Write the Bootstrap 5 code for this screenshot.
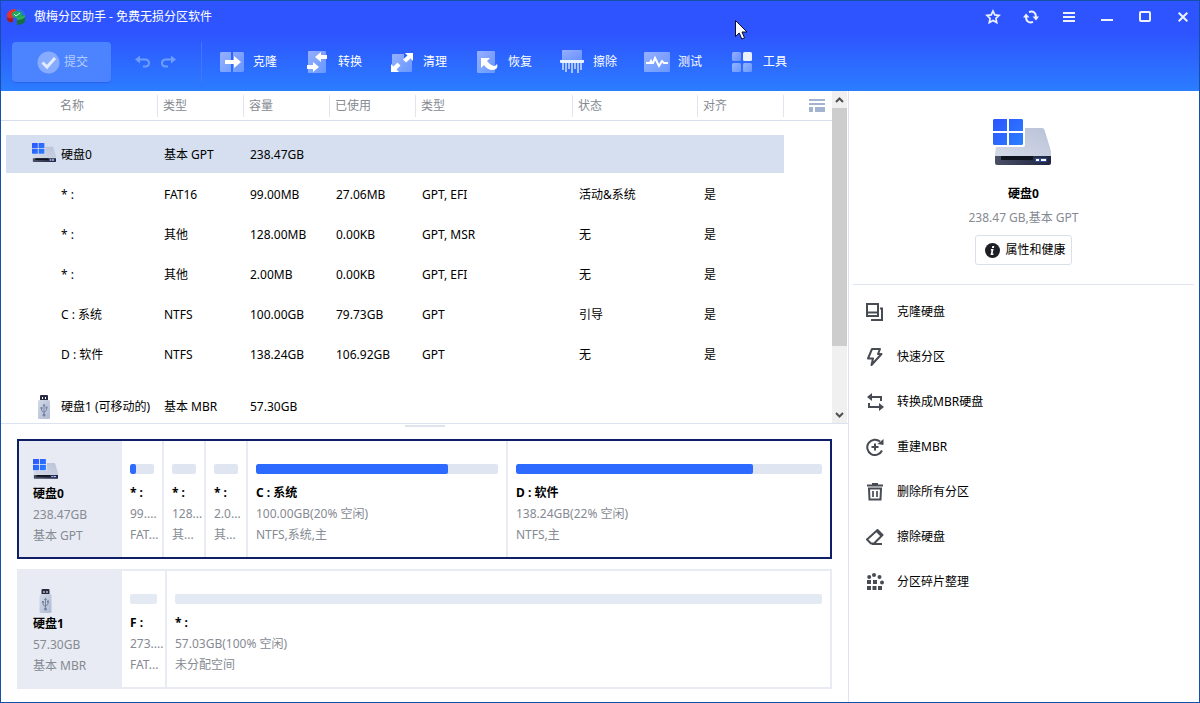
<!DOCTYPE html>
<html lang="zh-CN">
<head>
<meta charset="utf-8">
<meta name="viewport" content="width=device-width, initial-scale=1">
<title>傲梅分区助手</title>
<link href="https://cdn.jsdelivr.net/npm/bootstrap@5.3.0/dist/css/bootstrap.min.css" rel="stylesheet">
<style>
  body { font: 12px/20px "Noto Sans", "Noto Sans CJK SC", sans-serif; color: #000; background: #fff; }
  button { font: inherit; color: inherit; background: none; border: 0; padding: 0; }
  svg { display: block; flex: none; }
  .app-window { min-height: 100vh; border: 1px solid #1450a8; }

  /* header */
  .app-header { height: 90px; color: #fff; background: linear-gradient(#2e54ff 32px, #2b7dff 90px); }
  .title-bar { height: 32px; padding: 0 1px 0 6px; }
  .win-btn { width: 30px; height: 30px; display: grid; place-items: center; }
  .tool-bar { height: 58px; padding-left: 11px; }
  .submit-btn { width: 99px; height: 40px; border-radius: 4px; background: #4c83ff; color: #b4ccff; box-shadow: 0 1px 1px #2a62ea; padding-left: 2px; }
  .tool-sep { width: 1px; height: 40px; background: #4474f8; margin: 0 14px 0 22px; }
  .tool-btn { width: 85px; gap: 5px; }
  .undo-group { margin-left: 24px; gap: 8px; }

  /* partition table */
  .main-pane { border-right: 1px solid #dde2f0; }
  .grid-pane { flex: 1 1 0; min-height: 200px; overflow: hidden; border-bottom: 1px solid #dde2f0; }
  .part-table { width: 100%; table-layout: fixed; border-collapse: separate; border-spacing: 0; }
  .part-table th { font-weight: 400; color: #868a92; height: 30px; padding: 0; border-bottom: 1px solid #d8deec; }
  .part-table th > div { height: 22px; line-height: 22px; padding-left: 5px; border-right: 1px solid #e2e5ef; }
  .part-table th:first-child > div { padding-left: 59px; }
  .part-table th:last-child > div { border: 0; padding-right: 7px; }
  .part-table tbody::before { content: ""; display: block; height: 14px; }
  .part-table td { height: 40px; padding: 4px 0 0 6px; white-space: nowrap; }
  .part-table td:first-child { padding-left: 60px; }
  .part-table .disk-row td { height: 38px; padding-top: 2px; }
  .part-table .disk-row td:first-child { border-left: 5px solid #fff; padding-left: 26px; }
  .part-table .picked td { background: #d5dfef; }
  .part-table .picked td:last-child { background: none; }
  .disk-ico { width: 24px; margin-right: 5px; }
  .scroll-rail { width: 15px; margin-right: 1px; background: #f0f0f0; }
  .scroll-btn { height: 17px; width: 15px; display: grid; place-items: center; }
  .scroll-thumb { background: #cdcdcd; height: 80%; }

  /* disk map */
  .split-grip { width: 40px; height: 2px; margin: 1px auto 12px; background: #dfe3ee; }
  .disk-map { padding: 0 16px 13px; gap: 10px; }
  .disk-box { height: 120px; border: 2px solid #e8ebf3; line-height: 21px; }
  .disk-box.chosen { border-color: #0f1f66; }
  .disk-label { width: 103px; flex: none; background: #e8ebf3; padding: 18px 0 0 14px; }
  .disk-label svg { margin-bottom: 4px; }
  .part-cell { padding: 23px 0 0 8px; border-right: 2px solid #e8ebf3; white-space: nowrap; overflow: hidden; min-width: 0; }
  .part-cell:last-child { border-right: 0; }
  .tiny { flex: 0 0 42px; }
  .tiny-wide { flex: 0 0 45px; }
  .use-bar { height: 10px; margin: 0 8px 8px 0; background: #dfe6f2; border-radius: 2px; overflow: hidden; }
  .use-bar > div { height: 10px; background: #2d6aff; border-radius: 2px; }
  .use-bar.blank { background: #e4eaf4; }
  .dim { color: #868a92; }

  /* side panel */
  .side-pane { flex: 0 0 350px; padding: 28px 5px 0 4px; }
  .disk-info { padding-bottom: 19px; border-bottom: 1px solid #e0e3f2; }
  .disk-pic { margin: 0 4px 19px 0; }
  .info-btn { border: 1px solid #dadfec; border-radius: 3px; height: 30px; width: 97px; gap: 5px; margin-top: 7px; padding-left: 4px; }
  .act-btn { height: 45px; padding-left: 13px; gap: 13px; color: #000; }
  .act-btn svg { color: #474c54; }
  .pointer { position: absolute; left: 735px; top: 20px; }
</style>
</head>
<body>
<svg width="0" height="0" class="position-absolute" aria-hidden="true">
  <defs>
    <linearGradient id="winG" gradientUnits="userSpaceOnUse" x1="0" y1="0" x2="30" y2="26"><stop offset="0" stop-color="#2d54ff"/><stop offset="1" stop-color="#2b80ff"/></linearGradient>
    <linearGradient id="topG" x1="0" y1="1" x2="1" y2="0"><stop offset="0" stop-color="#d5dae7"/><stop offset="1" stop-color="#b9c2d8"/></linearGradient>
    <linearGradient id="drkG"><stop offset="0" stop-color="#4a4f66"/><stop offset="1" stop-color="#1f2540"/></linearGradient>
    <linearGradient id="usbG" x1="0" y1="0" x2="1" y2="1"><stop offset="0" stop-color="#d3dae8"/><stop offset="1" stop-color="#aeb9d2"/></linearGradient>
    <linearGradient id="lt" x1="0" y1="0" x2="1" y2="1"><stop offset="0" stop-color="#fff" stop-opacity=".5"/><stop offset="1" stop-color="#fff" stop-opacity=".28"/></linearGradient>
    <symbol id="hdd" viewBox="0 0 58 46" preserveAspectRatio="xMidYMin">
      <path d="M32 9h17q2 0 2.500 2L58 32v5H2v-3l1-6h27q2 0 2-2z" fill="url(#topG)"/>
      <path d="M2 37h56v7q0 2-2 2H4q-2 0-2-2z" fill="url(#drkG)"/>
      <path d="M8 37h32v3q0 1-1 1H9q-1 0-1-1z" fill="#10141f"/>
      <path d="M42 39h12v4H42z" fill="#2f4a94"/><path d="M43 40h3v2h-3zM48 40h5v2h-5z" fill="#fff"/>
      <path d="M1 0h13v12H0V1zM16 0h13l1 1v11H16zM0 14h14v12H1l-1-1zM16 14h14v11l-1 1H16z" fill="url(#winG)"/>
    </symbol>
    <symbol id="usb" viewBox="0 0 12 24">
      <path d="M2 1q0-1 1-1h6q1 0 1 1v4H2z" fill="#272c44"/><path d="M4 2h1v2H4zM7 2h1v2H7z" fill="#fff"/>
      <rect y="5" width="12" height="19" rx="1.500" fill="url(#usbG)"/>
      <path d="M6 10v10M3.500 13v2q0 1.500 2.500 2.500M8.500 12.500v2q0 1.500-2.500 2.500" fill="none" stroke="#7683a0"/><path d="M6 8.500l1.500 2.500h-3zM2.500 12h2v2h-2zM7.500 11.500h2v2h-2z" fill="#7683a0"/><circle cx="6" cy="20" r="1.500" fill="#7683a0"/>
    </symbol>
  </defs>
</svg>

<div class="app-window d-flex flex-column">
  <header class="app-header">
    <div class="title-bar d-flex align-items-center">
      <svg width="19" height="16" viewBox="0 0 19 16"><path d="M0 10V5q2-5 9-5v5l-3 2v4l-3 1q-3 0-3-2z" fill="#e0342c"/><path d="M0 8q3 2 6 1v4q-5 1-6-3z" fill="#a91c1c"/><path d="M10 0q8 0 8 6l-8 1z" fill="#2d6fe8"/><path d="M5 5q1-3 5-3 5 0 5 3 0 4-5 4-5 0-5-4z" fill="#1ea865"/><path d="M10 8l8-2v7q-3 3-8 3z" fill="#176f3f"/><path d="M10 8l8-2v2q-2 3-8 3z" fill="#2cae55"/><path d="M7 5l2 2 4-3" stroke="#c5f4d6" fill="none"/></svg>
      <span class="ms-2 flex-grow-1">傲梅分区助手 - 免费无损分区软件</span>
      <div class="d-flex gap-2">
        <button class="win-btn" aria-label="收藏"><svg width="16" height="16" viewBox="0 0 16 16" fill="none" stroke="#eef2ff" stroke-width="1.700"><path d="M8 2l1.800 3.900 4.200.5-3.100 2.900.8 4.200L8 11.400l-3.700 2.100.8-4.200L2 6.400l4.200-.5z"/></svg></button>
        <button class="win-btn" aria-label="刷新"><svg width="16" height="16" viewBox="0 0 16 16" fill="none" stroke="#eef2ff" stroke-width="2"><path d="M6 3.200Q9 1.800 11.500 3.700 13 5 13 8M10 12.800Q7 14.200 4.500 12.300 3 11 3 8"/><path d="M9.500 7.500H16l-3 4zM0 8.500h6.500L3 4.500z" fill="#eef2ff" stroke="none"/></svg></button>
        <button class="win-btn" aria-label="菜单"><svg width="12" height="10"><path d="M0 1h12M0 5h12M0 9h12" stroke="#eef2ff" stroke-width="2"/></svg></button>
        <button class="win-btn" aria-label="最小化"><svg width="12" height="10"><path d="M0 8h12" stroke="#eef2ff" stroke-width="2"/></svg></button>
        <button class="win-btn" aria-label="最大化"><svg width="12" height="12"><rect x="1" y="1" width="10" height="9" rx="1" fill="none" stroke="#eef2ff" stroke-width="2"/></svg></button>
        <button class="win-btn" aria-label="关闭"><svg width="10" height="10"><path d="M.7.700l8.600 8.600M9.300.700L.7 9.300" stroke="#eef2ff" stroke-width="2"/></svg></button>
      </div>
    </div>
    <div class="tool-bar d-flex align-items-center">
      <button class="submit-btn d-flex align-items-center justify-content-center gap-1"><svg width="23" height="23" viewBox="0 0 23 23"><circle cx="11.500" cy="11.500" r="11" fill="#86abff"/><path d="M5.500 11.500l4.500 4.500 8-9" fill="none" stroke="#e3ecff" stroke-width="3"/></svg>提交</button>
      <div class="undo-group d-flex">
        <button aria-label="撤销"><svg width="18" height="14" viewBox="0 0 18 14"><path d="M4 4.500h6q4 0 4 3.500t-4 3.500H8" fill="none" stroke="#6f9dff" stroke-width="2"/><path d="M0 4.500l5-4v8z" fill="#6f9dff"/></svg></button>
        <button aria-label="重做"><svg width="18" height="14" viewBox="0 0 18 14"><path d="M11 4.500H5q-4 0-4 3.500t4 3.500h2" fill="none" stroke="#6f9dff" stroke-width="2"/><path d="M15 4.500l-5-4v8z" fill="#6f9dff"/></svg></button>
      </div>
      <div class="tool-sep"></div>
      <button class="tool-btn d-flex align-items-center"><svg width="32" height="24" viewBox="0 0 32 24"><path d="M5 2h10v20H5l-1-1V3zM17 2h10l1 1v18l-1 1H17z" fill="url(#lt)"/><path d="M9 10h9V6l7 6-7 6v-4H9z" fill="#fff"/></svg>克隆</button>
      <button class="tool-btn d-flex align-items-center"><svg width="32" height="24" viewBox="0 0 32 24"><rect x="7" y="1" width="18" height="22" rx="1" fill="url(#lt)"/><path d="M26 5h-6V2l-6 5 6 5V9h6zM6 15h6v-3l6 5-6 5v-3H6z" fill="#fff"/></svg>转换</button>
      <button class="tool-btn d-flex align-items-center"><svg width="32" height="24" viewBox="0 0 32 24"><path d="M6 5q0-1 1-1h11v5h8v12q0 1-1 1H7q-1 0-1-1z" fill="url(#lt)"/><path d="M19 3h8v8l-2.500-2.500-4.500 4-3-3 4.500-4zM5 14v8h8l-2.500-2.500 4-4-3-3-4 4z" fill="#fff"/></svg>清理</button>
      <button class="tool-btn d-flex align-items-center"><svg width="32" height="24" viewBox="0 0 32 24"><rect x="6" y="1" width="18" height="22" rx="1" fill="url(#lt)"/><path d="M10 8h9l-3 3q4 5 8 5l2-2q2 5-4 6-6 0-9-5l-3 3z" fill="#fff"/></svg>恢复</button>
      <button class="tool-btn d-flex align-items-center"><svg width="32" height="24" viewBox="0 0 32 24"><path d="M6 10V1q0-1 1-1h18q1 0 1 1v9z" fill="url(#lt)"/><path d="M4 10h24v2q0 1-1 1H5q-1 0-1-1z" fill="#eaf1ff"/><path d="M7 13v7M10 13v9M13 13v6M16 13v10M19 13v6M22 13v10M25 13v7" stroke="#a5c2ff" stroke-width="2"/></svg>擦除</button>
      <button class="tool-btn d-flex align-items-center"><svg width="32" height="24" viewBox="0 0 32 24"><rect x="3" y="2" width="26" height="20" rx="1" fill="url(#lt)"/><path d="M5 13h4l1-2 1 2h1l2-5 4 8 3-5 2 2h4" fill="none" stroke="#fff" stroke-width="2"/></svg>测试</button>
      <button class="tool-btn d-flex align-items-center"><svg width="32" height="24" viewBox="0 0 32 24"><rect x="6" y="2" width="9" height="9" rx="1.500" fill="url(#lt)"/><rect x="17" y="2" width="9" height="9" rx="1.500" fill="#e9f0ff"/><rect x="6" y="13" width="9" height="9" rx="1.500" fill="url(#lt)"/><rect x="17" y="13" width="9" height="9" rx="1.500" fill="url(#lt)"/></svg>工具</button>
    </div>
  </header>

  <div class="d-flex flex-grow-1">
    <main class="main-pane d-flex flex-column flex-grow-1">
      <div class="grid-pane d-flex">
        <div class="flex-grow-1">
          <table class="part-table">
            <colgroup><col style="width:157px"><col style="width:86px"><col style="width:86px"><col style="width:86px"><col style="width:157px"><col style="width:125px"><col style="width:86px"><col></colgroup>
            <thead>
              <tr><th><div>名称</div></th><th><div>类型</div></th><th><div>容量</div></th><th><div>已使用</div></th><th><div>类型</div></th><th><div>状态</div></th><th><div>对齐</div></th>
              <th><div class="d-flex align-items-center justify-content-end"><button aria-label="选择列"><svg width="16" height="13"><path d="M0 1h16M0 5h16" stroke="#a3b4d0" stroke-width="2"/><path d="M0 8h4v5H0zM6 8h10v5H6z" fill="#a3b4d0"/></svg></button></div></th></tr>
            </thead>
            <tbody>
              <tr class="disk-row picked"><td><div class="d-flex align-items-center"><svg class="disk-ico" height="24"><use href="#hdd"/></svg>硬盘0</div></td><td>基本 GPT</td><td>238.47GB</td><td></td><td></td><td></td><td></td><td></td></tr>
              <tr><td>* :</td><td>FAT16</td><td>99.00MB</td><td>27.06MB</td><td>GPT, EFI</td><td>活动&amp;系统</td><td>是</td><td></td></tr>
              <tr><td>* :</td><td>其他</td><td>128.00MB</td><td>0.00KB</td><td>GPT, MSR</td><td>无</td><td>是</td><td></td></tr>
              <tr><td>* :</td><td>其他</td><td>2.00MB</td><td>0.00KB</td><td>GPT, EFI</td><td>无</td><td>是</td><td></td></tr>
              <tr><td>C : 系统</td><td>NTFS</td><td>100.00GB</td><td>79.73GB</td><td>GPT</td><td>引导</td><td>是</td><td></td></tr>
              <tr><td>D : 软件</td><td>NTFS</td><td>138.24GB</td><td>106.92GB</td><td>GPT</td><td>无</td><td>是</td><td></td></tr>
            </tbody>
            <tbody>
              <tr class="disk-row"><td><div class="d-flex align-items-center"><svg class="disk-ico" height="24"><use href="#usb"/></svg>硬盘1 (可移动的)</div></td><td>基本 MBR</td><td>57.30GB</td><td></td><td></td><td></td><td></td><td></td></tr>
            </tbody>
          </table>
        </div>
        <div class="scroll-rail d-flex flex-column flex-shrink-0">
          <button class="scroll-btn" aria-label="向上滚动"><svg width="9" height="6"><path d="M1 5l3.500-3.500L8 5" fill="none" stroke="#505050" stroke-width="2"/></svg></button>
          <div class="flex-grow-1"><div class="scroll-thumb"></div></div>
          <button class="scroll-btn" aria-label="向下滚动"><svg width="9" height="6"><path d="M1 1l3.500 3.500L8 1" fill="none" stroke="#505050" stroke-width="2"/></svg></button>
        </div>
      </div>

      <div class="split-grip"></div>
      <div class="disk-map d-flex flex-column">
        <section class="disk-box chosen d-flex">
          <div class="disk-label"><svg width="25" height="20"><use href="#hdd"/></svg><div class="fw-bold">硬盘0</div><div class="dim">238.47GB</div><div class="dim">基本 GPT</div></div>
          <div class="part-cell tiny"><div class="use-bar"><div style="width:27%"></div></div><div class="fw-bold">* :</div><div class="dim">99....</div><div class="dim">FAT...</div></div>
          <div class="part-cell tiny"><div class="use-bar"></div><div class="fw-bold">* :</div><div class="dim">128...</div><div class="dim">其...</div></div>
          <div class="part-cell tiny"><div class="use-bar"></div><div class="fw-bold">* :</div><div class="dim">2.0...</div><div class="dim">其...</div></div>
          <div class="part-cell" style="flex:250 1 0"><div class="use-bar"><div style="width:79.500%"></div></div><div class="fw-bold">C : 系统</div><div class="dim">100.00GB(20% 空闲)</div><div class="dim">NTFS,系统,主</div></div>
          <div class="part-cell" style="flex:314 1 0"><div class="use-bar"><div style="width:77.300%"></div></div><div class="fw-bold">D : 软件</div><div class="dim">138.24GB(22% 空闲)</div><div class="dim">NTFS,主</div></div>
        </section>
        <section class="disk-box d-flex">
          <div class="disk-label"><svg width="25" height="24" class="mb-0"><use href="#usb"/></svg><div class="fw-bold">硬盘1</div><div class="dim">57.30GB</div><div class="dim">基本 MBR</div></div>
          <div class="part-cell tiny-wide"><div class="use-bar blank"></div><div class="fw-bold">F :</div><div class="dim">273....</div><div class="dim">FAT...</div></div>
          <div class="part-cell flex-grow-1"><div class="use-bar blank"></div><div class="fw-bold">* :</div><div class="dim">57.03GB(100% 空闲)</div><div class="dim">未分配空间</div></div>
        </section>
      </div>
    </main>

    <aside class="side-pane">
      <div class="disk-info d-flex flex-column align-items-center">
        <svg class="disk-pic" width="58" height="46"><use href="#hdd"/></svg>
        <div class="fw-bold">硬盘0</div>
        <div class="dim mt-1">238.47 GB,基本 GPT</div>
        <button class="info-btn d-flex align-items-center justify-content-center"><svg width="15" height="15" viewBox="0 0 15 15"><circle cx="7.500" cy="7.500" r="7.500" fill="#1d1f24"/><path d="M7.300 3h2l-.4 2h-2zM6 6h2.600l-1 4.500h1L8.300 12H5.500l1-4.500H5.700z" fill="#fff"/></svg>属性和健康</button>
      </div>
      <nav class="d-flex flex-column pt-1" aria-label="磁盘操作">
        <button class="act-btn d-flex align-items-center"><svg width="18" height="18" fill="none" stroke="currentColor" stroke-width="2"><path d="M1 1h11v12H1zM1 9.500h11M5 17h11V5.500h-2"/></svg>克隆硬盘</button>
        <button class="act-btn d-flex align-items-center"><svg width="18" height="18" fill="none" stroke="currentColor" stroke-width="2" stroke-linejoin="round"><path d="M6 1h8l-2 5h3.500L5.500 17l1.500-6.500H2L6 1z"/></svg>快速分区</button>
        <button class="act-btn d-flex align-items-center"><svg width="18" height="18" fill="none" stroke="currentColor" stroke-width="2"><path d="M5 4h10v4M3 10v4h10"/><path d="M1 4l5-4v8zM18 14l-5-4v8z" fill="currentColor" stroke="none"/></svg>转换成MBR硬盘</button>
        <button class="act-btn d-flex align-items-center"><svg width="18" height="18" fill="none" stroke="currentColor" stroke-width="2"><path d="M14 3.500A7.700 7.700 0 1 0 16 12.500M5.500 9h7M9 5.500v7"/><path d="M11.500 6L17.500 1v6z" fill="currentColor" stroke="none"/></svg>重建MBR</button>
        <button class="act-btn d-flex align-items-center"><svg width="18" height="18" fill="none" stroke="currentColor" stroke-width="2"><path d="M1 2.500h16M6 1h6M3 5.500h12L14.500 16.500h-11z"/><path d="M7 8v6M11 8v6" stroke-width="1.700"/></svg>删除所有分区</button>
        <button class="act-btn d-flex align-items-center"><svg width="18" height="18" fill="none" stroke="currentColor" stroke-width="2"><path d="M11.500 2l5 5-8.500 8.500H5l-4-4z" stroke-linejoin="round"/><path d="M6 16h10M10.500 3l5 5" /></svg>擦除硬盘</button>
        <button class="act-btn d-flex align-items-center"><svg width="18" height="18" fill="currentColor"><path d="M1 7h4v4H1zM1 13h4v4H1zM6.500 13h4v4h-4zM12 13h4v4h-4zM7 7h4v4H7z"/><circle cx="3.200" cy="4" r="2"/><circle cx="8" cy="2" r="2"/><circle cx="13.500" cy="4" r="2"/><circle cx="16" cy="9.500" r="2"/></svg>分区碎片整理</button>
      </nav>
    </aside>
  </div>
</div>
<svg class="pointer" width="13" height="20" viewBox="0 0 13 20" aria-hidden="true"><path d="M.5.500v16l3.700-3.500 2.600 6 2.700-1.200-2.500-5.800h5z" fill="#fff" stroke="#0a0d2a"/></svg>
<script src="https://cdn.jsdelivr.net/npm/bootstrap@5.3.0/dist/js/bootstrap.bundle.min.js"></script>
</body>
</html>
